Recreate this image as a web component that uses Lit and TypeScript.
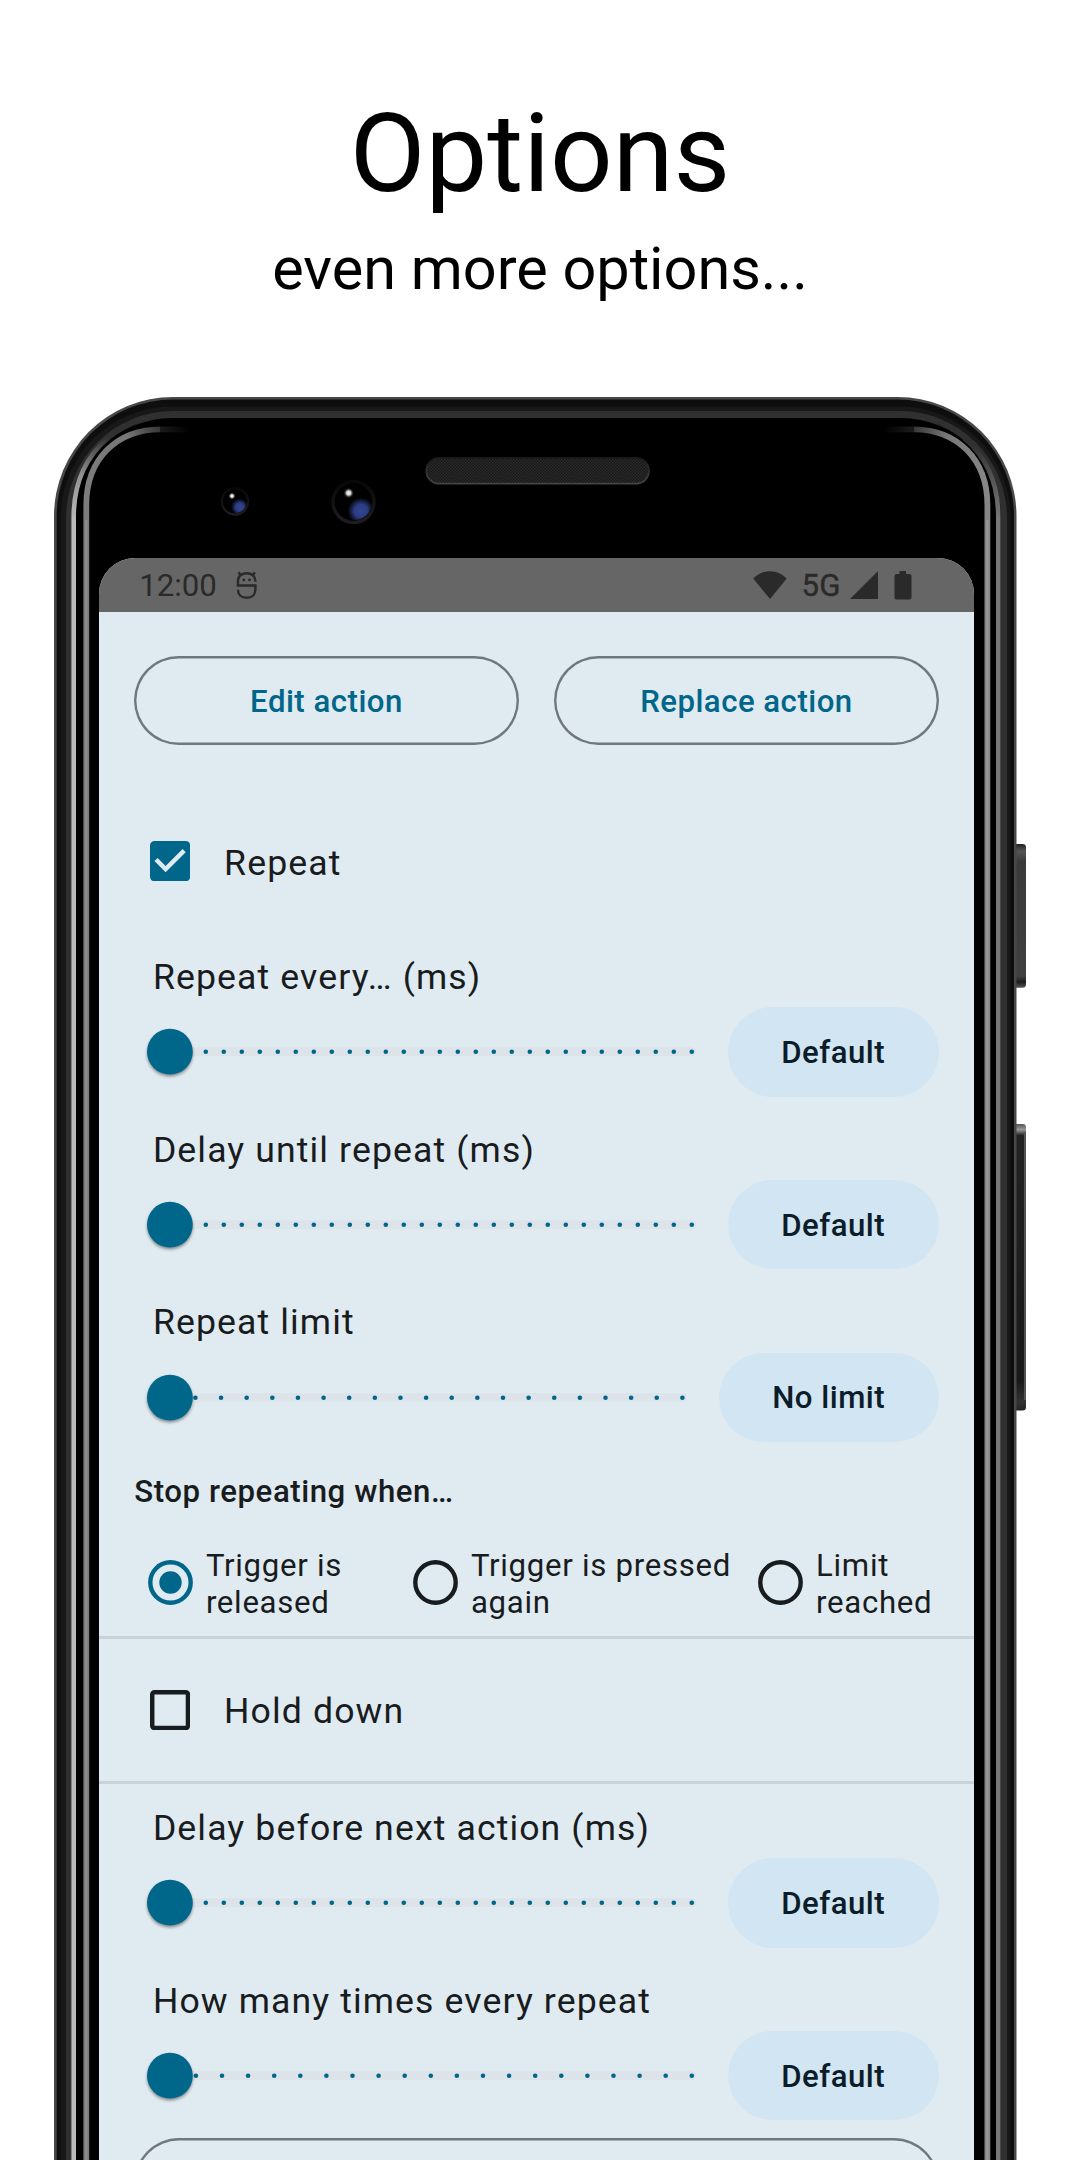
import { LitElement, html, svg, css } from "lit";
import { customElement, property } from "lit/decorators.js";

@customElement("phone-frame")
class PhoneFrame extends LitElement {
  static styles = css`
    :host { display: block; }
    svg { display: block; }
  `;
  render() {
    return html`<svg width="1080" height="1800" viewBox="0 360 1080 1800">
      <defs>
        <linearGradient id="edge" gradientUnits="userSpaceOnUse" x1="86" y1="470" x2="190" y2="429">
          <stop offset="0" stop-color="#7c7c7c"/><stop offset=".45" stop-color="#777"/><stop offset="1" stop-color="#000"/>
        </linearGradient>
        <linearGradient id="edgeR" gradientUnits="userSpaceOnUse" x1="987" y1="470" x2="883" y2="429">
          <stop offset="0" stop-color="#868686"/><stop offset=".45" stop-color="#777"/><stop offset="1" stop-color="#000"/>
        </linearGradient>
        <linearGradient id="rimL" gradientUnits="userSpaceOnUse" x1="74" y1="520" x2="108" y2="437">
          <stop offset="0" stop-color="#b9b9b9"/><stop offset=".5" stop-color="#909090"/><stop offset="1" stop-color="#303030"/>
        </linearGradient>
        <linearGradient id="rimR" gradientUnits="userSpaceOnUse" x1="998" y1="520" x2="970" y2="445">
          <stop offset="0" stop-color="#777"/><stop offset=".5" stop-color="#555"/><stop offset="1" stop-color="#303030"/>
        </linearGradient>
        <linearGradient id="power" x1="0" y1="0" x2="0" y2="1">
          <stop offset="0" stop-color="#222"/><stop offset=".05" stop-color="#555"/><stop offset=".12" stop-color="#3a3a3a"/>
          <stop offset=".92" stop-color="#404040"/><stop offset=".96" stop-color="#1c1c1c"/><stop offset="1" stop-color="#555"/>
        </linearGradient>
        <linearGradient id="volume" x1="0" y1="0" x2="0" y2="1">
          <stop offset="0" stop-color="#555"/><stop offset=".02" stop-color="#999"/><stop offset=".04" stop-color="#222"/>
          <stop offset=".9" stop-color="#191919"/><stop offset=".97" stop-color="#333"/><stop offset="1" stop-color="#222"/>
        </linearGradient>
        <pattern id="mesh" width="3" height="3" patternUnits="userSpaceOnUse">
          <rect width="3" height="3" fill="#161616"/>
          <rect width="1.5" height="1.5" fill="#2b2b2b"/><rect x="1.5" y="1.5" width="1.5" height="1.5" fill="#2b2b2b"/>
        </pattern>
        <linearGradient id="grille" x1="0" y1="0" x2="0" y2="1">
          <stop offset="0" stop-color="#1a1a1a"/><stop offset="1" stop-color="#444"/>
        </linearGradient>
        <radialGradient id="lens" cx=".7" cy=".74" r=".36">
          <stop offset="0" stop-color="#33468f"/><stop offset=".5" stop-color="#2b3c82"/><stop offset="1" stop-color="#000"/>
        </radialGradient>
        <radialGradient id="glint">
          <stop offset="0" stop-color="#fff"/><stop offset=".4" stop-color="#ccc"/><stop offset="1" stop-color="#000" stop-opacity="0"/>
        </radialGradient>
        <linearGradient id="ring" x1="0" y1="0" x2="0" y2="1">
          <stop offset="0" stop-color="#080808"/><stop offset="1" stop-color="#1e1c1f"/>
        </linearGradient>
      </defs>
      <path d="M1015 844h7.500a3.500 3.500 0 0 1 3.500 3.500v136.700a3.500 3.500 0 0 1-3.500 3.500H1015z" fill="url(#power)"/>
      <path d="M1015 1124h7.500a3.500 3.500 0 0 1 3.500 3.500v279.500a3.500 3.500 0 0 1-3.500 3.500H1015z" fill="url(#volume)"/>
      <path d="M1025 1134v266" stroke="#666" stroke-width="1.500"/>
      <rect x="54" y="397" width="962.500" height="2000" rx="119" fill="#484848"/>
      <rect x="56.700" y="399.500" width="957.300" height="2000" rx="116.500" fill="#0e0e0e"/>
      <rect x="60.500" y="406.500" width="950" height="2000" rx="111" fill="#181818"/>
      <rect x="66" y="411" width="941" height="2000" rx="107" fill="#303030"/>
      <rect x="72" y="418" width="929" height="2000" rx="100" fill="#000"/>
      <path d="M73.700 2160V517C73.700 480 88 455 108 438" fill="none" stroke="url(#rimL)" stroke-width="4.600"/>
      <path d="M998.300 2160V517C998.300 480 984 455 964 438" fill="none" stroke="url(#rimR)" stroke-width="4.600"/>
      <path d="M86.300 2160V505C86.300 460 116 429.500 160 429.300H192" fill="none" stroke="url(#edge)" stroke-width="5.800"/>
      <path d="M86.300 2160V520" stroke="#8e8e8e" stroke-width="2"/>
      <path d="M987.400 2160V505C987.400 460 957.700 429.500 914 429.300H882" fill="none" stroke="url(#edgeR)" stroke-width="5.800"/>
      <path d="M987.400 2160V520" stroke="#989898" stroke-width="2"/>
      <path d="M160 424V434H195V424ZM914 424V434H878V424Z" fill="#000" opacity=".5"/>
      <rect x="426.300" y="458" width="222.700" height="25.700" rx="12.850" fill="url(#mesh)" stroke="url(#grille)" stroke-width="1.800"/>
      <circle cx="235" cy="501.500" r="13" fill="#000" stroke="url(#ring)" stroke-width="2.500"/>
      <circle cx="235" cy="501.500" r="11.800" fill="url(#lens)"/>
      <circle cx="232" cy="496" r="3.800" fill="url(#glint)"/>
      <circle cx="353.500" cy="502" r="20.500" fill="#000" stroke="url(#ring)" stroke-width="3.500"/>
      <circle cx="353.500" cy="502" r="18.500" fill="url(#lens)"/>
      <circle cx="348.700" cy="493" r="5.500" fill="url(#glint)"/>
    </svg>`;
  }
}

@customElement("status-bar")
class StatusBar extends LitElement {
  static styles = css`
    :host {
      display: flex; align-items: center; box-sizing: border-box; height: 53.700px;
      padding: 0 62px 0 40.500px; background: #666; color: #2a2a2a;
      font: 400 31.200px/37px Roboto, sans-serif;
    }
    .time { padding-top: 2px; }
    .badge { margin-left: 19.500px; }
    .spacer { flex: 1; }
    .net { margin: 0 9px 0 14px; padding-top: 1px; letter-spacing: .400px; -webkit-text-stroke: .400px currentColor; }
    .battery { margin-left: 16px; }
    svg { display: block; fill: currentColor; }
  `;
  render() {
    return html`
      <span class="time">12:00</span>
      <svg class="badge" width="22" height="30" viewBox="0 0 22 30">
        <g fill="none" stroke="currentColor" stroke-width="2.400">
          <path d="M2 15.700V10.800C2 6 6 3.200 10.700 3.200S19.400 6 19.400 10.800V11.800"/>
          <path d="M.8 15.500H20.500"/>
          <path d="M19.400 15.500V19.500C19.400 24.800 15.800 27.800 10.700 27.800S2 24.800 2 19.800"/>
          <path d="M5 5.200L2.400 2.400M16.400 5.200L19 2.400"/>
        </g>
        <circle cx="7.800" cy="9.900" r="1.400"/><circle cx="13.500" cy="9.900" r="1.400"/>
      </svg>
      <span class="spacer"></span>
      <svg width="34" height="28" viewBox="0 0 34 28"><path d="M17 28L.3 7.600C5 3 10.500.300 17 .300S29 3 33.700 7.600Z"/></svg>
      <span class="net">5G</span>
      <svg width="28" height="28" viewBox="0 0 28 28"><path d="M28 0V28H0Z"/></svg>
      <svg class="battery" width="18" height="30" viewBox="0 0 18 30">
        <path d="M5.500 1H12V4H15.500A2 2 0 0 1 17.500 6V27.500A2 2 0 0 1 15.500 29.500H2.500A2 2 0 0 1 .5 27.500V6A2 2 0 0 1 2.500 4H5.500Z"/>
      </svg>`;
  }
}

@customElement("option-slider")
class OptionSlider extends LitElement {
  @property() label = "";
  @property() action = "Default";
  @property({ type: Number }) steps = 29;
  @property({ type: Number }) span = 522;

  static styles = css`
    :host { display: block; padding-top: 26.900px; }
    .label {
      margin-left: 18.600px; height: 56.400px; font-size: 35.640px; line-height: 53.500px;
      letter-spacing: 1.110px; white-space: nowrap;
    }
    .row { display: flex; justify-content: space-between; height: 89.400px; }
    svg { display: block; overflow: visible; }
    .thumb { filter: drop-shadow(0 2px 1.800px rgba(0, 0, 0, .4)); }
    .tonal {
      border: 0; border-radius: 45px; padding: 2px 53.500px 0; background: #d2e5f3; color: #0b1d28;
      font: 500 31.200px/44px Roboto, sans-serif; letter-spacing: .480px; white-space: nowrap;
    }
  `;
  render() {
    const ticks = Array.from({ length: this.steps }, (_, i) => 35.8 + (this.span * (i + 1)) / this.steps);
    return html`
      <div class="label">${this.label}</div>
      <div class="row">
        <svg width=${this.span + 40} height="89.400">
          <rect x="33" y="40.200" width=${this.span + 7} height="9" rx="4.500" fill="#dce3e9"/>
          ${ticks.map((x) => svg`<circle cx=${x} cy="44.700" r="2.300" fill="#00668a"/>`)}
          <circle class="thumb" cx="35.900" cy="44.700" r="22.900" fill="#00668a"/>
        </svg>
        <button class="tonal">${this.action}</button>
      </div>`;
  }
}

@customElement("option-check")
class OptionCheck extends LitElement {
  @property() label = "";
  @property({ type: Boolean }) checked = false;
  static styles = css`
    :host {
      display: flex; align-items: center; gap: 33.700px; padding-left: 51.500px;
      font-size: 35.640px; line-height: 53.500px; letter-spacing: 1.110px;
    }
    svg { display: block; }
    .text { padding-top: 4.200px; }
  `;
  render() {
    return html`
      <svg width="40.200" height="40.200" viewBox="3 3 18 18">
        ${this.checked
          ? svg`<rect x="3" y="3" width="18" height="18" rx="2" fill="#00668a"/>
              <path d="M10 17l-5-5 1.410-1.410L10 14.170l7.590-7.590L19 8z" fill="#e0ebf1"/>`
          : svg`<rect x="4" y="4" width="16" height="16" rx="1" fill="none" stroke="#191c1e" stroke-width="2"/>`}
      </svg>
      <span class="text">${this.label}</span>`;
  }
}

@customElement("option-radio")
class OptionRadio extends LitElement {
  @property({ type: Array }) lines: string[] = [];
  @property({ type: Boolean }) checked = false;
  static styles = css`
    :host {
      display: flex; align-items: center; gap: 13px; white-space: nowrap;
      font-size: 31.200px; line-height: 37.400px; letter-spacing: .700px;
    }
    svg { display: block; flex: none; }
    .text { padding-top: 3px; }
  `;
  render() {
    const color = this.checked ? "#00668a" : "#191c1e";
    return html`
      <svg width="45" height="45">
        <circle cx="22.500" cy="22.500" r="20.200" fill="none" stroke=${color} stroke-width="4.400"/>
        ${this.checked ? svg`<circle cx="22.500" cy="22.500" r="11.200" fill=${color}/>` : ""}
      </svg>
      <div class="text">${this.lines.map((line) => html`<div>${line}</div>`)}</div>`;
  }
}

@customElement("app-root")
class AppRoot extends LitElement {
  static styles = css`
    :host {
      display: block; position: relative; box-sizing: border-box; width: 1080px; height: 2160px;
      overflow: hidden; background: #fff; color: #191c1e; font-family: Roboto, sans-serif;
    }
    .heading { height: 558px; box-sizing: border-box; padding-top: 89px; text-align: center; color: #000; }
    .title { margin: 0; font-size: 110px; line-height: 129px; font-weight: 400; }
    .subtitle { margin: 16px 0 0; font-size: 59.400px; line-height: 70px; }
    .frame { position: absolute; left: 0; top: 360px; }
    .screen {
      position: relative; width: 875.300px; height: 1602px; margin-left: 98.700px; overflow: hidden;
      background: #e0ebf1; border-radius: 36px 36px 0 0;
    }
    .actions { display: flex; gap: 35.600px; padding: 44.300px 35.400px 0 35.600px; }
    .outlined {
      flex: 1; box-sizing: border-box; height: 89.500px; border: 0; border-radius: 45px;
      box-shadow: inset 0 0 0 2.400px #70787d;
      padding: 2px 0 0; background: none; color: #00668a;
      font: 500 31.200px/44px Roboto, sans-serif; letter-spacing: .480px;
    }
    .repeat { height: 107px; margin-top: 62.300px; }
    .sliders { padding: 9.200px 35.400px 0 35.600px; }
    .sliders.after { padding-top: 0; margin-top: -8.400px; }
    .stop { margin: 28.200px 35.600px 0; font-size: 31.200px; line-height: 44.600px; font-weight: 500; letter-spacing: .560px; }
    .radios { display: grid; grid-template-columns: 265px 345.200px 1fr; height: 107px; margin-top: 14.700px; padding-left: 49.200px; }
    .divider { height: 2.200px; background: #c8d2d8; }
    .hold { height: 142.700px; }
    .actions.last { padding-top: 17.600px; }
  `;
  render() {
    return html`
      <header class="heading">
        <h1 class="title">Options</h1>
        <p class="subtitle">even more options...</p>
      </header>
      <phone-frame class="frame"></phone-frame>
      <main class="screen">
        <status-bar></status-bar>
        <div class="actions">
          <button class="outlined">Edit action</button>
          <button class="outlined">Replace action</button>
        </div>
        <option-check class="repeat" label="Repeat" checked></option-check>
        <div class="sliders">
          <option-slider label="Repeat every… (ms)"></option-slider>
          <option-slider label="Delay until repeat (ms)"></option-slider>
          <option-slider label="Repeat limit" action="No limit" steps="20" span="512.600"></option-slider>
        </div>
        <div class="stop">Stop repeating when…</div>
        <div class="radios">
          <option-radio .lines=${["Trigger is", "released"]} checked></option-radio>
          <option-radio .lines=${["Trigger is pressed", "again"]}></option-radio>
          <option-radio .lines=${["Limit", "reached"]}></option-radio>
        </div>
        <div class="divider"></div>
        <option-check class="hold" label="Hold down"></option-check>
        <div class="divider"></div>
        <div class="sliders after">
          <option-slider label="Delay before next action (ms)"></option-slider>
          <option-slider label="How many times every repeat" steps="20"></option-slider>
        </div>
        <div class="actions last"><button class="outlined"></button></div>
      </main>`;
  }
}
